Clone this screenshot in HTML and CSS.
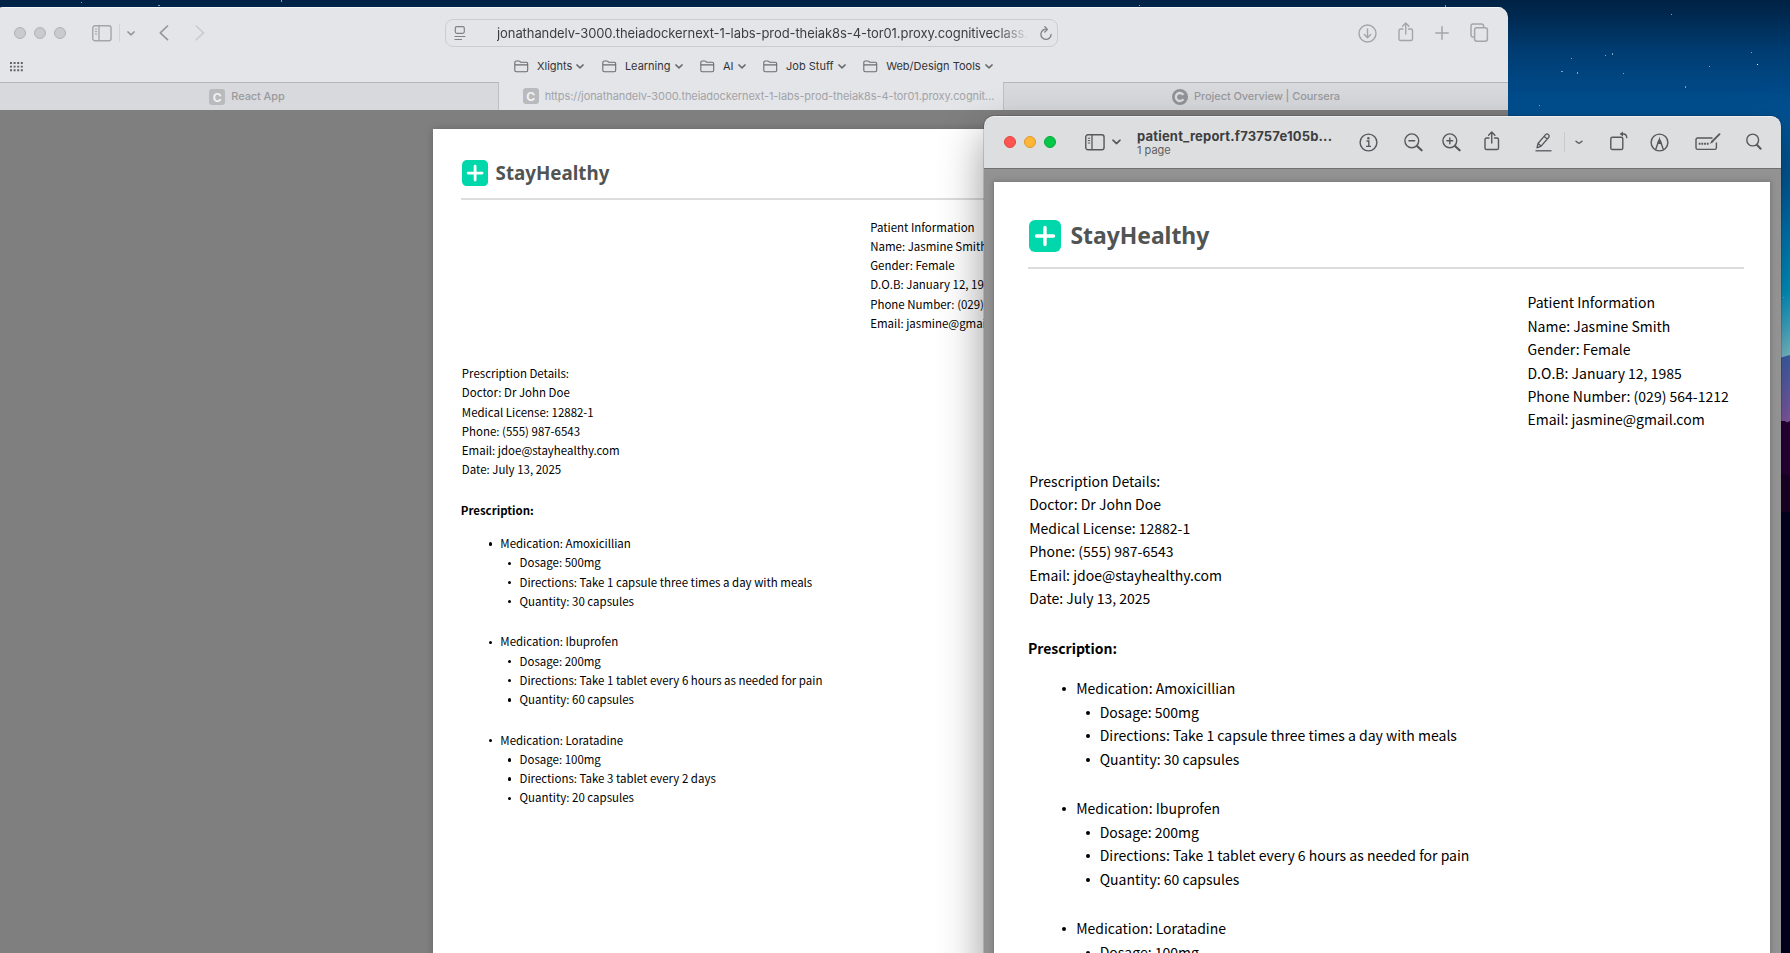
FILE: index.html
```html
<!DOCTYPE html>
<html lang="en">
<head>
<meta charset="utf-8">
<title>Patient report</title>
<link rel="stylesheet" href="styles.css">
</head>
<body>
<svg width="0" height="0" class="defs">
  <defs>
    <symbol id="sidebar" viewBox="0 0 20 17"><rect x=".75" y=".75" width="18.3" height="15" rx="2.2" fill="none" stroke="currentColor" stroke-width="1.4"/><path d="M7 1v14.5" stroke="currentColor" stroke-width="1.3"/><path d="M2.8 4.2h2.4M2.8 6.6h2.4M2.8 9h2.4" stroke="currentColor" stroke-width="1"/></symbol>
    <symbol id="chev" viewBox="0 0 8 5"><path d="M.9.9 4 3.9 7.1.9" fill="none" stroke="currentColor" stroke-width="1.5" stroke-linecap="round" stroke-linejoin="round"/></symbol>
    <symbol id="folder" viewBox="0 0 15 13"><path d="M.8 10.3V2.4Q.8 1 2.2 1h2.6q.6 0 1 .4l.5.5q.4.4 1 .4h4.9q1.5 0 1.5 1.5v6.5q0 1.5-1.5 1.5H2.3Q.8 11.800.8 10.3ZM.8 4.900h13" fill="none" stroke="currentColor" stroke-width="1.1"/></symbol>
    <symbol id="share" viewBox="0 0 16 20"><path d="M5 7H2.600Q1 7 1 8.600v8.300q0 1.600 1.600 1.600h10.300q1.600 0 1.600-1.600V8.600Q14.500 7 12.900 7H10.500M7.750 12V1.200M4.600 4.200 7.750 1l3.150 3.200" fill="none" stroke="currentColor" stroke-width="1.4" stroke-linecap="round" stroke-linejoin="round"/></symbol>
    <symbol id="cross" viewBox="0 0 32 32"><rect width="32" height="32" rx="6" fill="#00d8ac"/><path d="M16 7.500v17M7.500 16h17" stroke="#fff" stroke-width="3.400" stroke-linecap="round"/></symbol>
  </defs>
</svg>

<main class="desktop">
  <svg class="wallpaper" viewBox="0 0 1790 953">
    <path d="M1770 360 1781 357.500 1790 355V425H1770Z" fill="url(#ridge)"/>
    <path d="M1770 421H1785L1787 422.500 1790 421V480H1770Z" fill="#2b0038"/>
    <path d="M1770 472 1781 473 1790 476V520H1770Z" fill="#1b0029"/>
    <path d="M1770 512H1790V953H1770Z" fill="#000021"/>
    <defs><linearGradient id="ridge" x1="0" y1="0" x2="0" y2="1"><stop offset="0" stop-color="#3f66b4"/><stop offset="1" stop-color="#8e5fae"/></linearGradient></defs>
    <g fill="#7fa6c6">
      <rect x="81" y="2" width="1" height="1"/><rect x="158" y="5" width="2" height="1"/><rect x="281" y="0" width="1" height="2"/>
      <rect x="1139" y="5" width="1" height="1"/><rect x="1445" y="5" width="1" height="2"/>
      <rect x="1671" y="14" width="1" height="1"/><rect x="1571" y="58" width="1" height="1"/><rect x="1605" y="55" width="1" height="1"/><rect x="1612" y="53" width="1" height="2"/>
      <rect x="1561" y="71" width="2" height="1"/><rect x="1577" y="72" width="1" height="2"/><rect x="1623" y="73" width="1" height="1"/><rect x="1685" y="86" width="1" height="2"/>
      <rect x="1709" y="66" width="1" height="1"/><rect x="1751" y="52" width="1" height="1"/><rect x="1757" y="64" width="1" height="1" fill="#fff"/><rect x="1539" y="105" width="1" height="1"/><rect x="1783" y="297" width="1" height="1"/>
    </g>
  </svg>

  <section class="window safari">
    <header class="chrome">
      <div class="toolbar">
        <div class="lights off"><i></i><i></i><i></i></div>
        <svg class="ico s-side" width="20" height="17"><use href="#sidebar"/></svg>
        <span class="rule"></span>
        <svg class="ico s-chev" width="8" height="5"><use href="#chev"/></svg>
        <svg class="ico s-back" width="10" height="16" viewBox="0 0 10 16"><path d="M8.500 1 1.300 7.800 8.500 14.600" fill="none" stroke="currentColor" stroke-width="1.700" stroke-linecap="round" stroke-linejoin="round"/></svg>
        <svg class="ico s-fwd" width="10" height="16" viewBox="0 0 10 16"><path d="M1.300 1 8.500 7.800 1.300 14.600" fill="none" stroke="currentColor" stroke-width="1.700" stroke-linecap="round" stroke-linejoin="round"/></svg>
        <div class="url">
          <svg class="ico" width="12" height="15" viewBox="0 0 12 15"><rect x="1.300" y=".7" width="9" height="6.600" rx="1.500" fill="none" stroke="currentColor" stroke-width="1.200"/><path d="M.5 10.500h10.800M.5 13.500h7.500" stroke="currentColor" stroke-width="1.200"/></svg>
          <span class="url-text">jonathandelv-3000.theiadockernext-1-labs-prod-theiak8s-4-tor01.proxy.cognitiveclass.</span>
          <svg class="ico" width="12" height="15" viewBox="0 0 12 15"><path d="M7 3.300A5.100 5.100 0 1 0 11.100 8.300M4.800.800 7.400 3.400 4.800 6" fill="none" stroke="currentColor" stroke-width="1.300" stroke-linecap="round" stroke-linejoin="round"/></svg>
        </div>
        <svg class="ico s-dl" width="19" height="19" viewBox="0 0 19 19"><g fill="none" stroke="currentColor" stroke-width="1.400" stroke-linecap="round" stroke-linejoin="round"><circle cx="9.500" cy="9.500" r="8.500"/><path d="M9.500 5v8.500M6.300 10.500 9.500 13.700l3.200-3.200"/></g></svg>
        <svg class="ico s-share" width="16" height="20"><use href="#share"/></svg>
        <svg class="ico s-plus" width="14" height="14" viewBox="0 0 14 14"><path d="M7 .8v12.400M.8 7h12.400" stroke="currentColor" stroke-width="1.500" stroke-linecap="round"/></svg>
        <svg class="ico s-tabs" width="19" height="20" viewBox="0 0 19 20"><path d="M4.600 14H3.200Q1 14 1 11.800V3.200Q1 1 3.200 1h8.200q2.200 0 2.200 2.200v1.400" fill="none" stroke="currentColor" stroke-width="1.500"/><rect x="4.600" y="4.700" width="12.800" height="13.500" rx="2.200" fill="none" stroke="currentColor" stroke-width="1.500"/></svg>
      </div>
      <nav class="bookmarks">
        <svg class="grid" width="14" height="10" viewBox="0 0 14 10"><path d="M0 1h14M0 4.600h14M0 8.200h14" stroke="#626366" stroke-width="1.900" stroke-dasharray="2 1.600"/></svg>
        <div class="folders">
          <span class="folder"><svg width="15" height="13"><use href="#folder"/></svg><b>Xlights</b><svg width="8" height="5"><use href="#chev"/></svg></span>
          <span class="folder"><svg width="15" height="13"><use href="#folder"/></svg><b>Learning</b><svg width="8" height="5"><use href="#chev"/></svg></span>
          <span class="folder"><svg width="15" height="13"><use href="#folder"/></svg><b>AI</b><svg width="8" height="5"><use href="#chev"/></svg></span>
          <span class="folder"><svg width="15" height="13"><use href="#folder"/></svg><b>Job Stuff</b><svg width="8" height="5"><use href="#chev"/></svg></span>
          <span class="folder"><svg width="15" height="13"><use href="#folder"/></svg><b>Web/Design Tools</b><svg width="8" height="5"><use href="#chev"/></svg></span>
        </div>
      </nav>
      <div class="tabs">
        <div class="tab t1"><em>C</em><span>React App</span></div>
        <div class="tab active"><em>C</em><span>https://jonathandelv-3000.theiadockernext-1-labs-prod-theiak8s-4-tor01.proxy.cognit...</span></div>
        <div class="tab t3"><svg width="16" height="16" viewBox="0 0 16 16"><circle cx="8" cy="8" r="8" fill="#939497"/><path d="M11.300 5.900A4 4 0 1 0 11.300 10.100" fill="none" stroke="#dcdde0" stroke-width="2.300"/></svg><span>Project Overview | Coursera</span></div>
      </div>
    </header>
    <div class="viewport">
      <article class="doc small">
        <div class="brand"><svg viewBox="0 0 32 32"><use href="#cross"/></svg><span>StayHealthy</span></div>
        <div class="patient"><p>Patient Information</p><p>Name: Jasmine Smith</p><p>Gender: Female</p><p>D.O.B: January 12, 1985</p><p>Phone Number: (029) 564-1212</p><p>Email: jasmine@gmail.com</p></div>
        <div class="details"><p>Prescription Details:</p><p>Doctor: Dr John Doe</p><p>Medical License: 12882-1</p><p>Phone: (555) 987-6543</p><p>Email: jdoe@stayhealthy.com</p><p>Date: July 13, 2025</p></div>
        <h2>Prescription:</h2>
        <ul class="meds">
          <li>Medication: Amoxicillian<ul><li>Dosage: 500mg</li><li>Directions: Take 1 capsule three times a day with meals</li><li>Quantity: 30 capsules</li></ul></li>
          <li>Medication: Ibuprofen<ul><li>Dosage: 200mg</li><li>Directions: Take 1 tablet every 6 hours as needed for pain</li><li>Quantity: 60 capsules</li></ul></li>
          <li>Medication: Loratadine<ul><li>Dosage: 100mg</li><li>Directions: Take 3 tablet every 2 days</li><li>Quantity: 20 capsules</li></ul></li>
        </ul>
      </article>
    </div>
  </section>

  <section class="window preview">
    <header class="titlebar">
      <div class="lights on"><i></i><i></i><i></i></div>
      <svg class="p-side" width="20" height="17"><use href="#sidebar"/></svg>
      <svg class="p-chev" width="9" height="6" viewBox="0 0 8 5"><use href="#chev"/></svg>
      <div class="title"><strong>patient_report.f73757e105b...</strong><small>1 page</small></div>
      <svg class="p-info" width="19" height="19" viewBox="0 0 19 19"><g fill="none" stroke="currentColor" stroke-width="1.400"><circle cx="9.500" cy="9.500" r="8.400"/><path d="M7.500 8h2.300v5.300M7 13.400h5"/></g><circle cx="9.400" cy="5.300" r="1.200" fill="currentColor"/></svg>
      <svg class="p-out" width="19" height="19" viewBox="0 0 19 19"><g fill="none" stroke="currentColor" stroke-width="1.400" stroke-linecap="round"><circle cx="7.800" cy="7.800" r="6.900"/><path d="M4.900 7.800h5.800"/><path d="m13 13 4.600 4.300" stroke-width="2.200"/></g></svg>
      <svg class="p-in" width="19" height="19" viewBox="0 0 19 19"><g fill="none" stroke="currentColor" stroke-width="1.400" stroke-linecap="round"><circle cx="7.800" cy="7.800" r="6.900"/><path d="M4.900 7.800h5.800M7.800 4.900v5.800"/><path d="m13 13 4.600 4.300" stroke-width="2.200"/></g></svg>
      <svg class="p-share" width="16" height="20"><use href="#share"/></svg>
      <svg class="p-pen" width="17" height="19" viewBox="0 0 17 19"><g fill="none" stroke="currentColor" stroke-width="1.300" stroke-linejoin="round"><path d="M2 14.800 3 10.500 10.600 1.600q1.300-1.300 2.700-.2t.5 2.800L6.100 13.100ZM9.200 3.400l3.100 2.600M3 10.500l3.100 2.600"/><path d="M.5 17.800h16"/></g></svg>
      <span class="rule"></span>
      <svg class="p-chev2" width="8" height="5" viewBox="0 0 8 5"><path d="M1 1.200 3.300 3Q4 3.500 4.700 3L7 1.200" fill="none" stroke="currentColor" stroke-width="1.400" stroke-linecap="round"/></svg>
      <svg class="p-rot" width="18" height="20" viewBox="0 0 18 20"><rect x=".8" y="6.200" width="12" height="12.300" rx="1.600" fill="none" stroke="currentColor" stroke-width="1.400"/><path d="M11.500 3h2q3.300 0 3.300 4.300" fill="none" stroke="currentColor" stroke-width="1.300"/><path d="M9.600 3 13 .5v5Z" fill="currentColor"/></svg>
      <svg class="p-mark" width="19" height="19" viewBox="0 0 19 19"><circle cx="9.500" cy="9.500" r="8.400" fill="none" stroke="currentColor" stroke-width="1.400"/><path d="M5.700 16.500 8.600 8h1.800l2.900 8.500" fill="none" stroke="currentColor" stroke-width="1.400"/><path d="M9.500 3.800 11.800 11H7.200Z" fill="currentColor"/></svg>
      <svg class="p-form" width="26" height="18" viewBox="0 0 26 18"><path d="M17.500 5H2.700Q1 5 1 6.700v8Q1 16.400 2.700 16.400h17q1.700 0 1.700-1.700V9.500" fill="none" stroke="currentColor" stroke-width="1.400"/><path d="M3.700 10.800h10" stroke="currentColor" stroke-width="1.900" stroke-dasharray="1.800 .9"/><path d="M24.500 1.200 17.600 8.200" stroke="currentColor" stroke-width="1.900" stroke-linecap="round"/><path d="m16.800 7.300 1.700 1.700-3.700 2Z" fill="currentColor"/></svg>
      <svg class="p-find" width="16" height="18" viewBox="0 0 16 18"><g fill="none" stroke="currentColor" stroke-linecap="round"><circle cx="6.700" cy="7" r="5.900" stroke-width="1.400"/><path d="m10.900 11.800 3.700 4" stroke-width="2"/></g></svg>
    </header>
    <div class="canvas">
      <article class="doc large">
        <div class="brand"><svg viewBox="0 0 32 32"><use href="#cross"/></svg><span>StayHealthy</span></div>
        <div class="patient"><p>Patient Information</p><p>Name: Jasmine Smith</p><p>Gender: Female</p><p>D.O.B: January 12, 1985</p><p>Phone Number: (029) 564-1212</p><p>Email: jasmine@gmail.com</p></div>
        <div class="details"><p>Prescription Details:</p><p>Doctor: Dr John Doe</p><p>Medical License: 12882-1</p><p>Phone: (555) 987-6543</p><p>Email: jdoe@stayhealthy.com</p><p>Date: July 13, 2025</p></div>
        <h2>Prescription:</h2>
        <ul class="meds">
          <li>Medication: Amoxicillian<ul><li>Dosage: 500mg</li><li>Directions: Take 1 capsule three times a day with meals</li><li>Quantity: 30 capsules</li></ul></li>
          <li>Medication: Ibuprofen<ul><li>Dosage: 200mg</li><li>Directions: Take 1 tablet every 6 hours as needed for pain</li><li>Quantity: 60 capsules</li></ul></li>
          <li>Medication: Loratadine<ul><li>Dosage: 100mg</li></ul></li>
        </ul>
      </article>
    </div>
  </section>
</main>
</body>
</html>
```
FILE: styles.css
```css
* { box-sizing: border-box; }
html, body { margin: 0; height: 100%; overflow: hidden; }
body { font-family: Inter, "Liberation Sans", sans-serif; }
p, h2, ul { margin: 0; padding: 0; }
.defs { position: absolute; }
svg { display: block; flex: none; }

.desktop {
  position: relative;
  width: 1790px;
  height: 953px;
  overflow: hidden;
  background: linear-gradient(#002244 0, #00284f 14px, #003c71 50px, #004f90 105px, #005c9f 180px, #0079b8 230px, #009acb 290px, #3fb2d2 325px, #82cbd8 357px);
}
.wallpaper { position: absolute; inset: 0; width: 1790px; height: 953px; }
.window { position: absolute; display: flex; flex-direction: column; }
.lights { display: flex; gap: 8px; }
.lights i { width: 12px; height: 12px; border-radius: 50%; }
.off i { background: #c9cacd; border: 1px solid #b2b3b6; }
.on i:nth-child(1) { background: #ff5552; border: 1px solid #e0443f; }
.on i:nth-child(2) { background: #ffb638; border: 1px solid #dd9a2c; }
.on i:nth-child(3) { background: #06c748; border: 1px solid #07a93b; }

/* Browser window */
.safari {
  left: -6px;
  top: 7px;
  width: 1514px;
  height: 960px;
  border-radius: 10px 10px 0 0;
  overflow: hidden;
}
.chrome { height: 103px; flex: none; background: #e4e5e9; border-top: 1px solid #f4f5f7; border-bottom: 1px solid #58595a; }
.toolbar { display: flex; align-items: center; height: 50px; padding-left: 20px; color: #a4a5a9; }
.toolbar .s-side { margin-left: 26px; }
.toolbar .rule { width: 1px; height: 18px; margin-left: 7px; background: #d3d4d8; }
.toolbar .s-chev { margin-left: 7px; color: #97989b; }
.toolbar .s-back { margin-left: 24px; color: #96979b; }
.toolbar .s-fwd { margin-left: 26px; color: #cbccd0; }
.url {
  display: flex;
  align-items: center;
  width: 613px;
  height: 28px;
  margin-left: 240px;
  padding: 0 5px 0 8px;
  border: 1px solid #cbccd0;
  border-radius: 8px;
  color: #818286;
}
.url-text {
  width: 535px;
  margin-left: 31px;
  margin-right: 9px;
  overflow: hidden;
  white-space: nowrap;
  font-size: 13px;
  letter-spacing: -0.08px;
  color: #3c3d40;
  -webkit-mask-image: linear-gradient(90deg, #000 500px, transparent 532px);
  mask-image: linear-gradient(90deg, #000 500px, transparent 532px);
}
.s-dl { margin-left: 300px; }
.s-share { margin: 0 0 2px 21px; }
.s-plus { margin-left: 21px; }
.s-tabs { margin-left: 21px; }

.bookmarks { display: flex; align-items: center; height: 17px; padding-left: 16px; }
.folders { display: flex; gap: 17.5px; margin-left: 490px; }
.folder { display: flex; align-items: center; color: #6b6c70; }
.folder b { margin: 0 4px 1px 8px; font-size: 11px; font-weight: 400; letter-spacing: 0; color: #333437; white-space: nowrap; }

.tabs { display: flex; height: 28px; margin-top: 7px; }
.tab { display: flex; align-items: center; justify-content: center; gap: 6px; background: #d8d9dd; border-top: 1px solid #b5b6ba; font-size: 11px; font-weight: 500; letter-spacing: -0.08px; color: #98999d; white-space: nowrap; }
.tab span { margin-bottom: 1px; }
.t1 { width: 505px; border-right: 1px solid #bebfc3; padding-right: 8px; padding-left: 10px; }
.active { width: 504px; background: #e4e5e9; border-top: 0; color: #a2a3a7; font-weight: 400; padding-left: 15px; }
.t3 { flex: 1; border-left: 1px solid #bebfc3; }
.tab em { width: 16px; height: 16px; border-radius: 3px; background: #b9babd; color: #f2f2f4; font: 700 12px/17px Inter, sans-serif; text-align: center; }

.viewport { flex: 1; padding: 19px 0 0 439px; background: #7f7f7f; }

/* Preview window */
.preview {
  left: 984px;
  top: 116px;
  width: 797px;
  height: 860px;
  border-radius: 10px 10px 0 0;
  box-shadow: 0 0 0 1px rgba(0, 0, 0, .14), 0 18px 44px rgba(0, 0, 0, .42);
}
.titlebar { display: flex; align-items: center; flex: none; height: 53px; padding: 0 0 1px 20px; border-radius: 10px 10px 0 0; border-top: 1px solid #efeff1; border-bottom: 1px solid #717173; background: #dddee0; color: #57585a; }
.titlebar .p-side { margin-left: 29px; }
.titlebar .p-chev { margin-left: 7px; }
.title { display: flex; flex-direction: column; width: 200px; margin: 0 0 1px 16px; white-space: nowrap; }
.title strong { font-size: 13px; line-height: 16px; font-weight: 700; letter-spacing: 0.19px; color: #3d3e40; }
.title small { font-size: 11px; line-height: 12px; color: #5e5f61; }
.p-info { margin-left: 21.5px; }
.p-out { margin-left: 26px; }
.p-in { margin-left: 19px; }
.p-share { margin: 0 0 2px 23px; }
.p-pen { margin-left: 35px; }
.titlebar .rule { width: 1px; height: 20px; margin-left: 12.5px; background: #c9cacc; }
.p-chev2 { margin-left: 10px; }
.p-rot { margin: 0 0 2px 27px; }
.p-mark { margin-left: 22px; }
.p-form { margin-left: 26px; }
.p-find { margin-left: 25px; }
.canvas { flex: 1; padding: 13px 11px 0 10px; background: #929292; overflow: hidden; }

/* Report sheet: every measure is a multiple of --u */
.doc {
  height: calc(var(--u) * 1010);
  padding: calc(var(--u) * 38.300) calc(var(--u) * 26) 0 calc(var(--u) * 33.900);
  background: #fff;
  color: #000;
  font-family: "Noto Sans CJK SC", sans-serif;
  font-size: calc(var(--u) * 14);
  line-height: calc(var(--u) * 23.470);
  white-space: nowrap;
}
.small { --u: .8195px; width: 638px; box-shadow: 0 0 8px rgba(0, 0, 0, .2); }
.large { --u: 1px; box-shadow: 0 0 5px 1px rgba(0, 0, 0, .2); }
.brand {
  display: flex;
  align-items: center;
  height: calc(var(--u) * 48.500);
  padding: 0 0 calc(var(--u) * 15) calc(var(--u) * 1);
  border-bottom: 2px solid #dcdcdc;
  gap: calc(var(--u) * 9.500);
  font: 700 calc(var(--u) * 22.900)/1 "Noto Sans", sans-serif;
  color: #505453;
}
.brand svg { width: calc(var(--u) * 32); height: calc(var(--u) * 32); }
.patient { padding: calc(var(--u) * 22.300) 0 0 calc(var(--u) * 499.600); }
.small .patient { padding-top: 17.500px; }
.details { padding: calc(var(--u) * 38) 0 0 calc(var(--u) * 1.300); }
.doc h2 { padding-top: calc(var(--u) * 26.500); font-size: inherit; font-weight: 700; }
.doc ul { list-style: none; }
.meds { padding: calc(var(--u) * 16.600) 0 0 calc(var(--u) * 48.300); }
.meds > li + li { margin-top: calc(var(--u) * 26.100); }
.meds ul { padding-left: calc(var(--u) * 23.500); }
.meds li::before {
  content: "";
  display: inline-block;
  width: calc(var(--u) * 4);
  height: calc(var(--u) * 4);
  margin: 0 calc(var(--u) * 10) calc(var(--u) * 3) calc(var(--u) * -14);
  border-radius: 50%;
  background: #000;
}
```
